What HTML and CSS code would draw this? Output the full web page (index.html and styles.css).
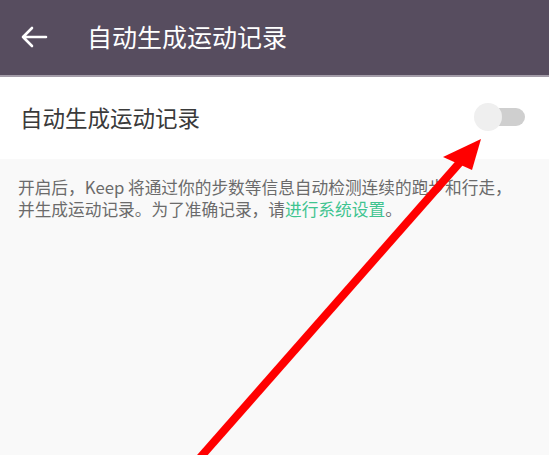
FILE: index.html
```html
<!DOCTYPE html>
<html lang="zh-CN">
<head>
  <meta charset="UTF-8">
  <title>自动生成运动记录</title>
  <link rel="stylesheet" href="styles.css">
</head>
<body>
  <div class="header">
    <svg class="back" width="28" height="22" viewBox="0 0 28 22">
      <path d="M26 11H3M12 2L3 11L12 20" fill="none" stroke="#fff" stroke-width="2.6" stroke-linecap="round" stroke-linejoin="round"/>
    </svg>
    <div class="header-title">自动生成运动记录</div>
  </div>

  <div class="row">
    <div class="row-label">自动生成运动记录</div>
    <div class="switch">
      <div class="switch-knob"></div>
    </div>
  </div>

  <div class="desc">
    开启后，Keep 将通过你的步数等信息自动检测连续的跑步和行走，<br>
    并生成运动记录。为了准确记录，请<span class="link">进行系统设置</span>。
  </div>

  <!-- 标注箭头 -->
  <svg class="annot" width="549" height="455" viewBox="0 0 549 455">
    <line x1="198" y1="460" x2="462" y2="160" stroke="#ff0000" stroke-width="8"/>
    <polygon points="481,139 443,157 472,170" fill="#ff0000"/>
  </svg>
</body>
</html>
```

FILE: styles.css
```css
body {
  margin: 0;
  background: #f9f9f9;
  font-family: "Noto Sans CJK SC", "Noto Sans", sans-serif;
  height: 455px;
  overflow: hidden;
  position: relative;
}
.header {
  height: 75px;
  background: #574d5f;
  border-bottom: 2px solid #a39ca8;
  display: flex;
  align-items: center;
  padding-left: 20px;
}
.back {
  display: block;
  margin-top: -2px;
}
.header-title {
  margin-left: 39px;
  color: #fff;
  font-size: 25px;
  line-height: 30px;
  margin-top: -4px;
}
.row {
  height: 82px;
  background: #fff;
  display: flex;
  align-items: center;
  justify-content: space-between;
  padding: 0 24px 0 20px;
}
.row-label {
  font-size: 22.5px;
  color: #3a3a3a;
  margin-top: -2px;
}
.switch {
  position: relative;
  width: 44px;
  height: 18px;
  border-radius: 9px;
  background: #cfcfcf;
  margin-top: -2px;
}
.switch-knob {
  position: absolute;
  left: -7px;
  top: -5px;
  width: 28px;
  height: 28px;
  border-radius: 50%;
  background: #efefef;
}
.desc {
  padding: 17px 18px;
  font-size: 16.7px;
  line-height: 22px;
  color: #6b6b6b;
}
.link {
  color: #3fc490;
}
.annot {
  position: absolute;
  left: 0;
  top: 0;
}
```
